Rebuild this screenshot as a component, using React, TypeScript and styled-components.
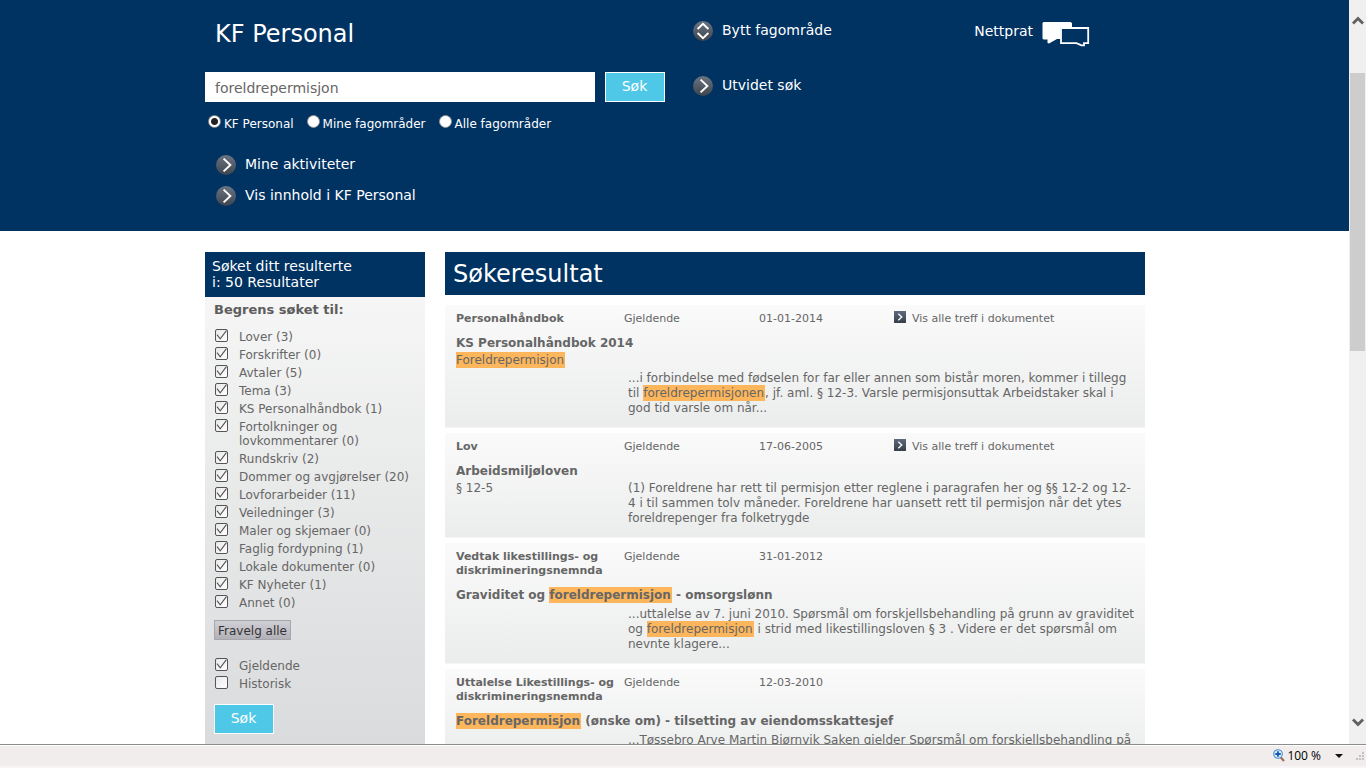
import React, { useState } from "react";
import styled, { createGlobalStyle, css } from "styled-components";

const navy = "#003262";
const grey = "#666";

const GlobalStyle = createGlobalStyle`
  *, *::before, *::after { box-sizing: border-box; }
  html, body { margin: 0; height: 100%; background: #fff; }
  body, button, input {
    font-family: Verdana, "DejaVu Sans", sans-serif;
    font-size: 12px;
  }
  h1, h2, h3, p, ul, fieldset { margin: 0; padding: 0; border: 0; }
  ul { list-style: none; }
  a { color: inherit; text-decoration: none; }
`;

const Window = styled.div`
  height: 100vh;
  display: flex;
  flex-direction: column;
  overflow: hidden;
`;

const Viewport = styled.div`
  flex: 1;
  min-height: 0;
  display: flex;
`;

const Page = styled.div`
  flex: 1;
  min-width: 0;
  overflow: hidden;
`;

const Container = styled.div`
  max-width: 941px;
  padding-left: 1px;
  margin: 0 auto;
`;

/* ---------- Header ---------- */

const Header = styled.header`
  background: ${navy};
  color: #fff;
  padding: 18px 0 25px;
`;

const HeaderGrid = styled(Container)`
  display: grid;
  grid-template-columns: 460px 1fr auto;
  column-gap: 28px;
  padding-right: 55px;
`;

const SiteTitle = styled.h1`
  font-size: 24px;
  font-weight: 400;
  line-height: 32px;
  padding-left: 10px;
  margin-bottom: 22px;
`;

const SearchRow = styled.div`
  display: flex;
  gap: 10px;
`;

const SearchInput = styled.input`
  flex: 1;
  min-width: 0;
  height: 30px;
  border: 0;
  padding: 2px 10px 0;
  font-size: 14px;
  color: ${grey};
  background: #fff;
  outline: none;
`;

const SearchButton = styled.button`
  width: 60px;
  height: 30px;
  padding: 0 1px 2px 0;
  border: 1px solid #fff;
  background: #4fc8e8;
  color: #fff;
  font-size: 14px;
  line-height: 16px;
`;

const ScopeRow = styled.fieldset`
  display: flex;
  gap: 13px;
  padding: 13px 0 0 3px;
`;

const ScopeLabel = styled.label`
  display: flex;
  gap: 3px;
  font-size: 12px;
  line-height: 18px;
  white-space: nowrap;
`;

const Radio = styled.input`
  appearance: none;
  flex: none;
  width: 13px;
  height: 13px;
  margin: 0;
  border: 1px solid #8b8f94;
  border-radius: 50%;
  background: #fff;
  &:checked {
    background: radial-gradient(circle, #222 0 3px, #fff 4px);
  }
`;

const LinkList = styled.ul<{ $top: number; $gap: number; $left?: number }>`
  display: flex;
  flex-direction: column;
  gap: ${(p) => p.$gap}px;
  padding: ${(p) => p.$top}px 0 0 ${(p) => p.$left ?? 0}px;
`;

const HeaderLink = styled.a`
  display: flex;
  align-items: flex-start;
  gap: 9px;
  font-size: 14px;
  line-height: 20px;
  white-space: nowrap;
  svg { display: block; flex: none; margin-top: 1px; }
`;

const ChatLink = styled(HeaderLink)`
  align-self: start;
  padding-top: 3px;
`;

/* ---------- Main ---------- */

const Columns = styled(Container)`
  display: grid;
  grid-template-columns: 220px 1fr;
  column-gap: 20px;
  align-items: start;
  padding-top: 21px;
  color: ${grey};
`;

const Sidebar = styled.aside`
  background: linear-gradient(#f9f9f9, #e8e9e9 240px, #dadbdd 492px);
  padding-bottom: 40px;
`;

const SidebarHead = styled.h2`
  background: ${navy};
  color: #fff;
  font-size: 14px;
  font-weight: 400;
  line-height: 16px;
  padding: 6px 7px 7px;
`;

const SidebarBody = styled.form`
  padding: 4px 8px 0 9px;
`;

const FilterTitle = styled.h3`
  font-size: 13px;
  line-height: 18px;
  color: #5d5d5d;
`;

const FilterList = styled.ul<{ $top: number }>`
  display: flex;
  flex-direction: column;
  gap: 4px;
  padding: ${(p) => p.$top}px 0 0 1px;
`;

const FilterLabel = styled.label`
  display: flex;
  gap: 11px;
  font-size: 12px;
  line-height: 14px;
`;

const Checkbox = styled.input`
  appearance: none;
  flex: none;
  width: 13px;
  height: 13px;
  margin: 0;
  border: 1px solid #555;
  border-radius: 2px;
  background: linear-gradient(135deg, #e8e8e8, #fff);
  grid-area: 1 / 1;
`;

const CheckCell = styled.span`
  display: grid;
  flex: none;
  width: 13px;
  height: 13px;
  margin-top: -1px;
  svg { grid-area: 1 / 1; z-index: 1; pointer-events: none; }
`;

const ClearButton = styled.button`
  display: block;
  height: 20px;
  margin-top: 10px;
  padding: 1px 3px 0;
  border: 1px solid #a7a6ac;
  background: linear-gradient(#d0cfd6, #b3b1b8);
  color: #333;
  font-size: 12px;
  line-height: 16px;
`;

const SidebarSearch = styled(SearchButton)`
  display: block;
  margin-top: 13px;
`;

const ResultsHead = styled.h2`
  background: ${navy};
  color: #fff;
  font-size: 24px;
  font-weight: 400;
  line-height: 42px;
  padding: 1px 8px 0;
`;

const ResultList = styled.div`
  display: flex;
  flex-direction: column;
  gap: 5px;
  padding-top: 10px;
`;

const Card = styled.article`
  padding: 7px 0 11px 11px;
  background: linear-gradient(#fafafa, #ebedec);
  border-bottom: 1px solid #f4f5f4;
`;

const Meta = styled.div`
  display: grid;
  grid-template-columns: 168px 135px 135px 1fr;
  font-size: 11px;
  line-height: 14px;
  white-space: nowrap;
`;

const DocType = styled.strong`
  font-weight: 700;
`;

const HitsLink = styled.a`
  display: flex;
  gap: 6px;
  svg { display: block; flex: none; margin-top: -1px; }
`;

const DocTitle = styled.h3`
  font-size: 12px;
  line-height: 16px;
  padding-top: 9px;
`;

const DocBody = styled.div<{ $beside?: boolean }>`
  display: grid;
  grid-template-columns: 172px 1fr;
  row-gap: 3px;
  font-size: 12px;
  line-height: 15px;
  white-space: nowrap;
  padding-top: 2px;
  ${(p) => !p.$beside && css`
    > p { grid-column: 2; }
    > span { grid-column: 1 / 3; }
  `}
`;

const Snippet = styled.p<{ $gap?: boolean }>`
  padding-top: ${(p) => (p.$gap ? 2 : 0)}px;
`;

const Hit = styled.mark`
  background: #fdb65b;
  color: inherit;
  padding: 1px 1px 1px 0;
`;

/* ---------- Browser chrome ---------- */

const ScrollTrack = styled.div`
  width: 17px;
  flex: none;
  display: flex;
  flex-direction: column;
  align-items: center;
  padding: 16px 1px 17px;
  background: #f0f0f0;
  svg { display: block; flex: none; }
`;

const ScrollRun = styled.div`
  flex: 1;
  width: 100%;
  display: grid;
  grid-template-rows: 48fr 278fr 367fr;
`;

const ScrollThumb = styled.div`
  grid-row: 2;
  background: #cdcdcd;
`;

const StatusBar = styled.footer`
  flex: none;
  height: 24px;
  display: flex;
  justify-content: flex-end;
  align-items: center;
  padding-right: 1px;
  border-top: 1px solid #8d8d8d;
  border-bottom: 2px solid #f7f5f5;
  background: #f0edec;
  box-shadow: inset 0 1px #fff;
  color: #000;
  svg { display: block; }
`;

const ZoomButton = styled.button`
  display: flex;
  align-items: center;
  gap: 2px;
  border: 0;
  padding: 0;
  margin-right: 12px;
  background: none;
  font-family: "Open Sans", sans-serif;
  font-size: 12px;
  line-height: 16px;
  color: #000;
  svg:last-child { margin-left: 12px; }
`;

/* ---------- Icons ---------- */

const Disc = ({ id, d }: { id: string; d: string }) => (
  <svg width="20" height="20" viewBox="0 0 20 20" aria-hidden="true">
    <defs>
      <linearGradient id={id} x1="0" y1="0" x2="0" y2="1">
        <stop offset="0" stopColor="#6b7482" />
        <stop offset="1" stopColor="#3d444d" />
      </linearGradient>
    </defs>
    <circle cx="10" cy="10" r="10" fill={`url(#${id})`} />
    <path d={d} fill="none" stroke="#fff" strokeWidth="1.9" />
  </svg>
);

const rightArrow = "M7.6 3.6 L14.4 10 L7.6 16.4";
const upDown = "M4.6 8 L10 2.9 L15.4 8 M4.6 12 L10 17.1 L15.4 12";

const ChatIcon = () => (
  <svg width="48" height="25" viewBox="0 0 48 25" aria-hidden="true">
    <path d="M1.5 0H28.5L30 1V5H18.5V17H15L7 21.5L5.5 21V17.5H1.5L0.5 16.5V1Z" fill="#fff" />
    <path d="M19 6H46.2V21.2H42V23.4H39.5L34.5 21.2H19Z" fill={navy} stroke="#fff" strokeWidth="1.8" />
  </svg>
);

const HitsIcon = ({ id }: { id: string }) => (
  <svg width="12" height="12" viewBox="0 0 12 12" aria-hidden="true">
    <defs>
      <linearGradient id={id} x1="0" y1="0" x2="0" y2="1">
        <stop offset="0" stopColor="#5d6a7d" />
        <stop offset="1" stopColor="#363f4a" />
      </linearGradient>
    </defs>
    <rect width="12" height="12" fill={`url(#${id})`} />
    <path d="M4.3 2.7 L7.8 6 L4.3 9.3" fill="none" stroke="#fff" strokeWidth="1.3" />
  </svg>
);

const Tick = () => (
  <svg width="13" height="13" viewBox="0 0 13 13" aria-hidden="true">
    <path d="M2 5.6 L5.2 9.8 L11.4 1.6" fill="none" stroke="#555" strokeWidth="1.1" />
  </svg>
);

const ScrollArrow = ({ down }: { down?: boolean }) => (
  <svg width="12" height="9" viewBox="0 0 12 9" aria-hidden="true">
    <path d={down ? "M1 1.5 L6 6.5 L11 1.5" : "M1 7.5 L6 2.5 L11 7.5"} fill="none" stroke="#606060" strokeWidth="2.8" />
  </svg>
);

const MagnifierIcon = () => (
  <svg width="12" height="13" viewBox="0 0 12 13" aria-hidden="true">
    <path d="M7.6 8.2 L11 12" stroke="#a0705a" strokeWidth="2.2" />
    <circle cx="5" cy="5" r="4.3" fill="#d6ecfb" stroke="#4b8fd0" strokeWidth="1.1" />
    <path d="M5 2.3V7.7M2.3 5H7.7" stroke="#1559b0" strokeWidth="1.8" />
  </svg>
);

const GripIcon = () => (
  <svg width="10" height="10" viewBox="0 0 10 10" aria-hidden="true">
    <path d="M7 1h2v2h-2zM4 4h2v2h-2zM7 4h2v2h-2zM1 7h2v2h-2zM4 7h2v2h-2zM7 7h2v2h-2z" fill="#c3c0c0" />
  </svg>
);

/* ---------- Data ---------- */

const scopes = ["KF Personal", "Mine fagområder", "Alle fagområder"];

const filters: React.ReactNode[] = [
  "Lover (3)",
  "Forskrifter (0)",
  "Avtaler (5)",
  "Tema (3)",
  "KS Personalhåndbok (1)",
  <>Fortolkninger og<br />lovkommentarer (0)</>,
  "Rundskriv (2)",
  "Dommer og avgjørelser (20)",
  "Lovforarbeider (11)",
  "Veiledninger (3)",
  "Maler og skjemaer (0)",
  "Faglig fordypning (1)",
  "Lokale dokumenter (0)",
  "KF Nyheter (1)",
  "Annet (0)",
];

interface Result {
  type: React.ReactNode;
  date: string;
  hits?: boolean;
  title: React.ReactNode;
  section?: React.ReactNode;
  beside?: boolean;
  snippet: React.ReactNode;
}

const results: Result[] = [
  {
    type: "Personalhåndbok",
    date: "01-01-2014",
    hits: true,
    title: "KS Personalhåndbok 2014",
    section: <Hit>Foreldrepermisjon</Hit>,
    snippet: (
      <>
        ...i forbindelse med fødselen for far eller annen som bistår moren, kommer i tillegg<br />
        til <Hit>foreldrepermisjonen</Hit>, jf. aml. § 12-3. Varsle permisjonsuttak Arbeidstaker skal i<br />
        god tid varsle om når...
      </>
    ),
  },
  {
    type: "Lov",
    date: "17-06-2005",
    hits: true,
    title: "Arbeidsmiljøloven",
    section: "§ 12-5",
    beside: true,
    snippet: (
      <>
        (1) Foreldrene har rett til permisjon etter reglene i paragrafen her og §§ 12-2 og 12-<br />
        4 i til sammen tolv måneder. Foreldrene har uansett rett til permisjon når det ytes<br />
        foreldrepenger fra folketrygde
      </>
    ),
  },
  {
    type: <>Vedtak likestillings- og<br />diskrimineringsnemnda</>,
    date: "31-01-2012",
    title: <>Graviditet og <Hit>foreldrepermisjon</Hit> - omsorgslønn</>,
    snippet: (
      <>
        ...uttalelse av 7. juni 2010. Spørsmål om forskjellsbehandling på grunn av graviditet<br />
        og <Hit>foreldrepermisjon</Hit> i strid med likestillingsloven § 3 . Videre er det spørsmål om<br />
        nevnte klagere...
      </>
    ),
  },
  {
    type: <>Uttalelse Likestillings- og<br />diskrimineringsnemnda</>,
    date: "12-03-2010",
    title: <><Hit>Foreldrepermisjon</Hit> (ønske om) - tilsetting av eiendomsskattesjef</>,
    snippet: <>...Tøssebro Arve Martin Bjørnvik Saken gjelder Spørsmål om forskjellsbehandling på</>,
  },
];

const Filter = ({ children, initial = true }: { children: React.ReactNode; initial?: boolean }) => {
  const [on, setOn] = useState(initial);
  return (
    <li>
      <FilterLabel>
        <CheckCell>
          <Checkbox type="checkbox" checked={on} onChange={() => setOn(!on)} />
          {on && <Tick />}
        </CheckCell>
        <span>{children}</span>
      </FilterLabel>
    </li>
  );
};

export default function App() {
  const [scope, setScope] = useState(scopes[0]);
  return (
    <Window>
      <GlobalStyle />
      <Viewport>
        <Page>
          <Header>
            <HeaderGrid>
              <div>
                <SiteTitle>KF Personal</SiteTitle>
                <SearchRow>
                  <SearchInput type="text" aria-label="Søk" defaultValue="foreldrepermisjon" />
                  <SearchButton type="button">Søk</SearchButton>
                </SearchRow>
                <ScopeRow>
                  {scopes.map((s) => (
                    <ScopeLabel key={s}>
                      <Radio type="radio" name="scope" checked={scope === s} onChange={() => setScope(s)} />
                      {s}
                    </ScopeLabel>
                  ))}
                </ScopeRow>
                <LinkList $top={21} $gap={10} $left={11}>
                  <li><HeaderLink href="#"><Disc id="d1" d={rightArrow} />Mine aktiviteter</HeaderLink></li>
                  <li><HeaderLink href="#"><Disc id="d2" d={rightArrow} />Vis innhold i KF Personal</HeaderLink></li>
                </LinkList>
              </div>
              <LinkList $top={2} $gap={34}>
                <li><HeaderLink href="#"><Disc id="d3" d={upDown} />Bytt fagområde</HeaderLink></li>
                <li><HeaderLink href="#"><Disc id="d4" d={rightArrow} />Utvidet søk</HeaderLink></li>
              </LinkList>
              <ChatLink href="#">Nettprat<ChatIcon /></ChatLink>
            </HeaderGrid>
          </Header>
          <Columns as="main">
            <Sidebar>
              <SidebarHead>Søket ditt resulterte<br />i: 50 Resultater</SidebarHead>
              <SidebarBody>
                <FilterTitle>Begrens søket til:</FilterTitle>
                <FilterList $top={11}>
                  {filters.map((f, i) => <Filter key={i}>{f}</Filter>)}
                </FilterList>
                <ClearButton type="button">Fravelg alle</ClearButton>
                <FilterList $top={19}>
                  <Filter>Gjeldende</Filter>
                  <Filter initial={false}>Historisk</Filter>
                </FilterList>
                <SidebarSearch type="button">Søk</SidebarSearch>
              </SidebarBody>
            </Sidebar>
            <section>
              <ResultsHead>Søkeresultat</ResultsHead>
              <ResultList>
                {results.map((r, i) => (
                  <Card key={i}>
                    <Meta>
                      <DocType>{r.type}</DocType>
                      <span>Gjeldende</span>
                      <span>{r.date}</span>
                      {r.hits && <HitsLink href="#"><HitsIcon id={`h${i}`} />Vis alle treff i dokumentet</HitsLink>}
                    </Meta>
                    <DocTitle>{r.title}</DocTitle>
                    <DocBody $beside={r.beside}>
                      {r.section && <span>{r.section}</span>}
                      <Snippet $gap={!r.section}>{r.snippet}</Snippet>
                    </DocBody>
                  </Card>
                ))}
              </ResultList>
            </section>
          </Columns>
        </Page>
        <ScrollTrack>
          <ScrollArrow />
          <ScrollRun><ScrollThumb /></ScrollRun>
          <ScrollArrow down />
        </ScrollTrack>
      </Viewport>
      <StatusBar>
        <ZoomButton type="button">
          <MagnifierIcon />
          100 %
          <svg width="8" height="4" viewBox="0 0 8 4" aria-hidden="true"><path d="M0 0H8L4 4Z" fill="#111" /></svg>
        </ZoomButton>
        <GripIcon />
      </StatusBar>
    </Window>
  );
}
